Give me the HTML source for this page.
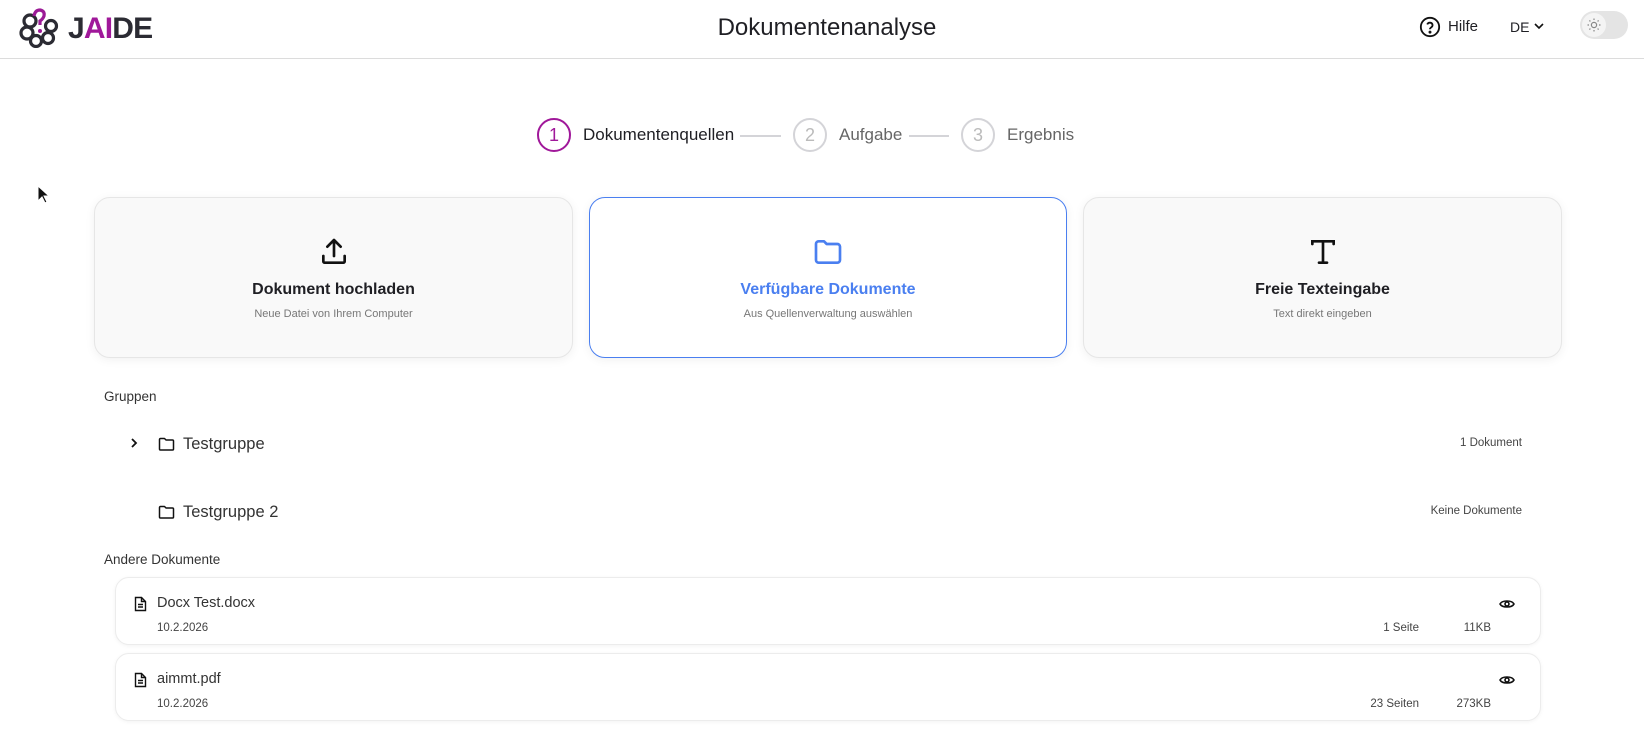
<!DOCTYPE html>
<html><head><meta charset="utf-8"><style>
*{box-sizing:border-box;margin:0;padding:0}
body{width:1644px;height:756px;overflow:hidden;background:#fff;font-family:"Liberation Sans",sans-serif;color:#1f1f24;position:relative}
.a{position:absolute}
.hdr{left:0;top:0;width:1644px;height:59px;border-bottom:1px solid #dcdcdc}
.card{position:absolute;top:197px;height:161px;border:1px solid #e6e6e6;border-radius:16px;background:#f9f9f9;box-shadow:0 2px 10px rgba(0,0,0,.06);text-align:center}
.card .t{position:absolute;left:0;right:0;top:83px;font-size:16px;font-weight:bold}
.card .s{position:absolute;left:0;right:0;top:110px;font-size:11px;color:#777}
.card svg{position:absolute;left:50%;top:38px;margin-left:-16px}
.circ{position:absolute;width:34px;height:34px;border-radius:50%;border:2px solid #d4d4d8;color:#bbb;font-size:18px;text-align:center;line-height:30px;top:118px}
.stxt{position:absolute;top:125px;font-size:17px;color:#666}
.line{position:absolute;top:135px;height:2px;background:#d4d4d8}
.doc{position:absolute;left:115px;width:1426px;height:68px;border:1px solid #ececec;border-radius:14px;box-shadow:0 1px 4px rgba(0,0,0,.05);background:#fff}
.sm{font-size:11.5px;color:#444}
</style></head><body>
<div class="a hdr"></div>
<svg class="a" style="left:19px;top:8px" width="40" height="40" viewBox="0 0 40 40" fill="none" stroke="#2b2b33" stroke-width="3.2">
<circle cx="11" cy="13" r="6"/><circle cx="8" cy="25" r="6"/><circle cx="17" cy="33" r="5.5"/><circle cx="29" cy="30" r="5.5"/><circle cx="32" cy="18" r="5.5"/>
<path d="M15 8 Q16 2 21 2 Q26 3 25 8 Q24 11 21 13 L21 17" stroke="#9b1a96"/><circle cx="21" cy="23" r="2" fill="#9b1a96" stroke="none"/></svg>
<div class="a" style="left:68px;top:12px;font-size:30px;font-weight:bold;letter-spacing:-0.8px;color:#2b2b33">J<span style="color:#a0189a">AI</span>DE</div>
<div class="a" style="left:0;width:1654px;top:14px;text-align:center;font-size:24px;color:#1f1f24">Dokumentenanalyse</div>
<svg class="a" style="left:1419px;top:16px" width="22" height="22" viewBox="0 0 24 24" fill="none" stroke="#111" stroke-width="2"><circle cx="12" cy="12" r="10"/><path d="M9 9.2a3 3 0 0 1 5.8 1c0 2-3 2.5-3 4.3"/><circle cx="12" cy="17.6" r=".6" fill="#111"/></svg>
<div class="a" style="left:1448px;top:18px;font-size:15px">Hilfe</div>
<div class="a" style="left:1510px;top:19px;font-size:14px">DE</div>
<svg class="a" style="left:1533px;top:21px" width="12" height="10" viewBox="0 0 12 10" fill="none" stroke="#111" stroke-width="1.6"><path d="M2 3l4 4 4-4"/></svg>
<div class="a" style="left:1580px;top:11px;width:48px;height:28px;border-radius:14px;background:#e4e4e4"></div>
<div class="a" style="left:1582px;top:13px;width:24px;height:24px;border-radius:12px;background:#f4f4f4"></div>
<svg class="a" style="left:1587px;top:18px" width="14" height="14" viewBox="0 0 14 14" fill="none" stroke="#888" stroke-width="1.2"><circle cx="7" cy="7" r="2.6"/><path d="M7 0.5v1.5M7 12v1.5M0.5 7h1.5M12 7h1.5M2.4 2.4l1 1M10.6 10.6l1 1M2.4 11.6l1-1M10.6 3.4l1-1"/></svg>

<div class="circ" style="left:537px;border-color:#a0189a;color:#a0189a">1</div>
<div class="stxt" style="left:583px;color:#1f1f24">Dokumentenquellen</div>
<div class="line" style="left:740px;width:41px"></div>
<div class="circ" style="left:793px">2</div>
<div class="stxt" style="left:839px">Aufgabe</div>
<div class="line" style="left:909px;width:40px"></div>
<div class="circ" style="left:961px">3</div>
<div class="stxt" style="left:1007px">Ergebnis</div>

<svg class="a" style="left:36px;top:185px" width="14" height="20" viewBox="0 0 14 20"><path d="M2 1v15l4-4 3 6 2-1-3-6h5z" fill="#111" stroke="#fff" stroke-width="1"/></svg>

<div class="card" style="left:94px;width:479px">
<svg width="32" height="32" viewBox="0 0 24 24" fill="none" stroke="#111" stroke-width="2" stroke-linecap="round" stroke-linejoin="round"><path d="M12 15V3M7 8l5-5 5 5M4 15v4a1 1 0 0 0 1 1h14a1 1 0 0 0 1-1v-4"/></svg>
<div class="t">Dokument hochladen</div><div class="s">Neue Datei von Ihrem Computer</div></div>
<div class="card" style="left:589px;width:478px;background:#fff;border-color:#4a7ff0">
<svg width="32" height="32" viewBox="0 0 24 24" fill="none" stroke="#4a7ff0" stroke-width="2" stroke-linejoin="round"><path d="M3 6a2 2 0 0 1 2-2h4l2 2h8a2 2 0 0 1 2 2v10a2 2 0 0 1-2 2H5a2 2 0 0 1-2-2z"/></svg>
<div class="t" style="color:#4a7ff0">Verfügbare Dokumente</div><div class="s">Aus Quellenverwaltung auswählen</div></div>
<div class="card" style="left:1083px;width:479px">
<svg width="32" height="32" viewBox="0 0 24 24" fill="none" stroke="#111" stroke-width="2" stroke-linecap="round"><path d="M4 6V4h16v2M12 4v16M9 20h6"/></svg>
<div class="t">Freie Texteingabe</div><div class="s">Text direkt eingeben</div></div>

<div class="a" style="left:104px;top:389px;font-size:13.5px;color:#333">Gruppen</div>
<svg class="a" style="left:128px;top:437px" width="12" height="12" viewBox="0 0 12 12" fill="none" stroke="#111" stroke-width="1.8"><path d="M4 2l4 4-4 4"/></svg>
<svg class="a" style="left:158px;top:437px" width="17" height="15" viewBox="0 0 17 15" fill="none" stroke="#111" stroke-width="1.5" stroke-linejoin="round"><path d="M1.5 2.5a1 1 0 0 1 1-1h4l1.5 1.5h6.5a1 1 0 0 1 1 1v8a1 1 0 0 1-1 1h-12a1 1 0 0 1-1-1z"/></svg>
<div class="a" style="left:183px;top:435px;font-size:16.5px;color:#333">Testgruppe</div>
<div class="a sm" style="right:122px;top:437px">1 Dokument</div>
<svg class="a" style="left:158px;top:505px" width="17" height="15" viewBox="0 0 17 15" fill="none" stroke="#111" stroke-width="1.5" stroke-linejoin="round"><path d="M1.5 2.5a1 1 0 0 1 1-1h4l1.5 1.5h6.5a1 1 0 0 1 1 1v8a1 1 0 0 1-1 1h-12a1 1 0 0 1-1-1z"/></svg>
<div class="a" style="left:183px;top:503px;font-size:16.5px;color:#333">Testgruppe 2</div>
<div class="a sm" style="right:122px;top:505px">Keine Dokumente</div>
<div class="a" style="left:104px;top:552px;font-size:13.5px;color:#333">Andere Dokumente</div>

<div class="doc" style="top:577px"></div>
<div class="doc" style="top:653px"></div>
<svg class="a" style="left:134px;top:596px" width="13" height="16" viewBox="0 0 13 16" fill="none" stroke="#111" stroke-width="1.4"><path d="M1.5 1.5h6l4 4v9h-10z M7.5 1.5v4h4 M4 8.5h5M4 11h5"/></svg>
<div class="a" style="left:157px;top:595px;font-size:14.5px;color:#333">Docx Test.docx</div>
<div class="a sm" style="left:157px;top:622px">10.2.2026</div>
<div class="a sm" style="right:225px;top:622px">1 Seite</div>
<div class="a sm" style="right:153px;top:622px">11KB</div>
<svg class="a" style="left:1499px;top:597px" width="16" height="14" viewBox="0 0 16 14" fill="none" stroke="#111" stroke-width="1.6"><path d="M1 7c2-4 12-4 14 0c-2 4-12 4-14 0z"/><circle cx="8" cy="7" r="2"/></svg>
<svg class="a" style="left:134px;top:672px" width="13" height="16" viewBox="0 0 13 16" fill="none" stroke="#111" stroke-width="1.4"><path d="M1.5 1.5h6l4 4v9h-10z M7.5 1.5v4h4 M4 8.5h5M4 11h5"/></svg>
<div class="a" style="left:157px;top:671px;font-size:14.5px;color:#333">aimmt.pdf</div>
<div class="a sm" style="left:157px;top:698px">10.2.2026</div>
<div class="a sm" style="right:225px;top:698px">23 Seiten</div>
<div class="a sm" style="right:153px;top:698px">273KB</div>
<svg class="a" style="left:1499px;top:673px" width="16" height="14" viewBox="0 0 16 14" fill="none" stroke="#111" stroke-width="1.6"><path d="M1 7c2-4 12-4 14 0c-2 4-12 4-14 0z"/><circle cx="8" cy="7" r="2"/></svg>
</body></html>
